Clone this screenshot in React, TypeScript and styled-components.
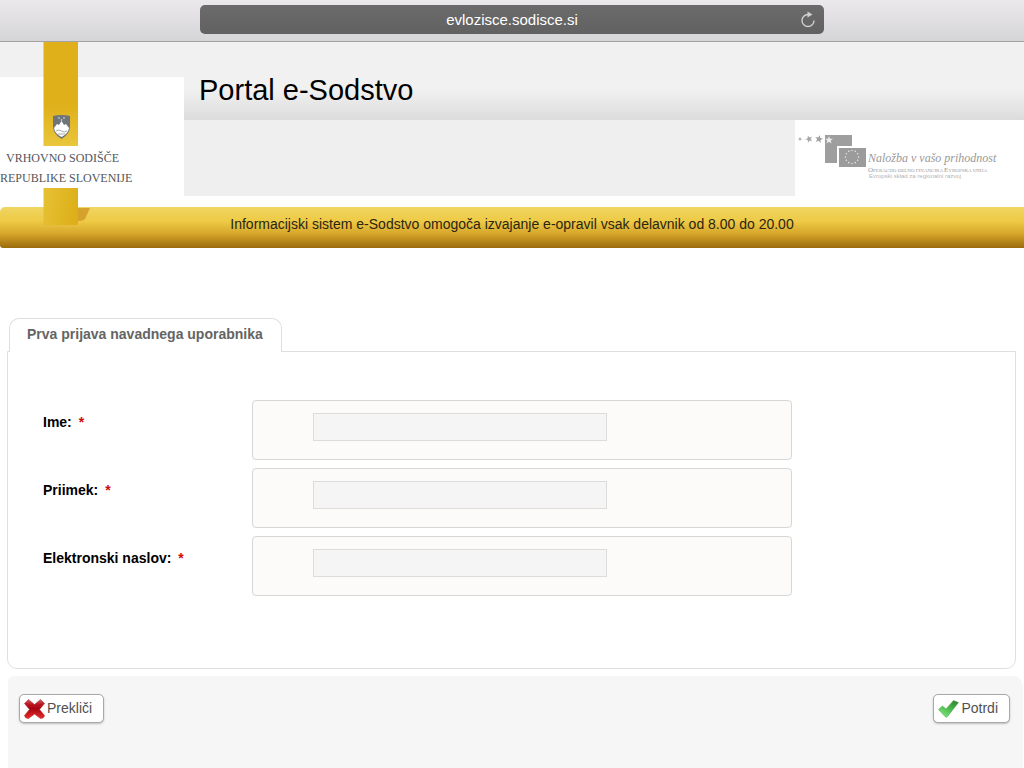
import React from "react";
import styled, { createGlobalStyle } from "styled-components";

const GlobalStyle = createGlobalStyle`
  * { box-sizing: border-box; }
  html, body, #root { min-height: 100%; }
  html { height: 100%; }
  body {
    margin: 0;
    height: 100%;
    background: #fff;
    color: #000;
    font-family: "Liberation Sans", Arial, sans-serif;
  }
  #root { height: 100%; }
`;

const Page = styled.div`
  display: flex;
  flex-direction: column;
  min-height: 100%;
`;

const BrowserBar = styled.div`
  display: flex;
  justify-content: center;
  padding: 5px 0 7px;
  background: linear-gradient(#ebe9ec, #d5d4d6);
  border-bottom: 1px solid #a3a3a6;
`;

const Address = styled.div`
  display: grid;
  grid-template-columns: 32px 1fr 32px;
  align-items: center;
  width: 61%;
  height: 29px;
  border-radius: 5px;
  background: linear-gradient(#6b6b6b, #616161);
  color: #fff;
  font-size: 15px;
  text-align: center;
`;

const Host = styled.span`
  grid-column: 2;
`;

const Reload = styled.button`
  display: grid;
  place-items: center;
  padding: 0;
  border: 0;
  background: none;
  color: #cfcfcf;
`;

const Header = styled.header`
  display: grid;
  grid-template-columns: 184px 1fr;
  padding-bottom: 11px;
`;

const LogoCell = styled.div`
  position: relative;
  padding-top: 35px;
  background: linear-gradient(#f1f1f1 35px, #fff 35px);
`;

const LogoArt = styled.svg`
  position: absolute;
  top: 0;
  left: 0;
  z-index: 1;
`;

const Title = styled.h1`
  margin: 0;
  padding: 30px 15px 0;
  height: 78px;
  background: linear-gradient(#f1f1f1 60%, #dcdcdc);
  font-size: 29px;
  line-height: 36px;
  font-weight: 400;
`;

const SubHeader = styled.div`
  display: flex;
  justify-content: flex-end;
  height: 76px;
  background: #efefef;
`;

const Sponsor = styled.div`
  width: 229px;
  background: #fff;
`;

const Notice = styled.p`
  margin: 0;
  height: 41px;
  padding: 7px 0 0;
  border-radius: 5px 0 0 3px;
  background: linear-gradient(#efd562, #eeca45 35%, #d6a62b 65%, #9b6b0c);
  color: #2b2512;
  font-size: 14px;
  line-height: 20px;
  text-align: center;
`;

const Main = styled.main`
  padding: 70px 8px 0 7px;
`;

const Tab = styled.h2`
  position: relative;
  width: fit-content;
  margin: 0 0 -1px 2px;
  padding: 5px 18px 8px 17px;
  border: 1px solid #dfdfdf;
  border-bottom: 0;
  border-radius: 10px 10px 0 0;
  background: #fff;
  color: #646464;
  font-size: 14px;
  line-height: 20px;
`;

const Panel = styled.div`
  display: flex;
  flex-direction: column;
  gap: 8px;
  padding: 48px 35px 72px;
  border: 1px solid #dfdfdf;
  border-radius: 0 0 10px 10px;
`;

const Row = styled.div`
  display: grid;
  grid-template-columns: 209px minmax(300px, 540px);
`;

const Label = styled.label`
  padding-top: 12px;
  font-size: 14px;
  line-height: 20px;
  font-weight: 700;
`;

const Required = styled.span`
  margin-left: 3px;
  color: #d00a0a;
`;

const FieldBox = styled.div`
  height: 60px;
  padding: 12px 60px;
  border: 1px solid #d6d6d6;
  border-radius: 4px;
  background: #fcfbf9;
`;

const Field = styled.input`
  display: block;
  width: 294px;
  max-width: 100%;
  height: 28px;
  border: 1px solid #dcdcda;
  border-radius: 0;
  padding: 0 6px;
  background: #f5f5f5;
  font: inherit;
`;

const Actions = styled.footer`
  display: flex;
  flex: 1;
  align-items: flex-start;
  justify-content: space-between;
  margin: 7px 1px 0 8px;
  padding: 18px 13px 44px 11px;
  border-radius: 6px 10px 0 0;
  background: #f6f6f6;
`;

const Action = styled.button`
  display: flex;
  align-items: center;
  gap: 2px;
  height: 29px;
  padding: 0 11px 2px 4px;
  border: 1px solid #a9a9a9;
  border-radius: 5px;
  background: #fff;
  box-shadow: 0 1px 2px #bbb;
  color: #505050;
  font-family: inherit;
  font-size: 14px;

  svg {
    margin-top: 2px;
  }
`;

const LogoText = styled.text`
  fill: #55565a;
  font-family: "Liberation Serif", "Times New Roman", serif;
  font-size: 12px;
`;

const Slogan = styled.text`
  fill: #999;
  font-family: "Liberation Serif", "Times New Roman", serif;
  font-size: 12px;
  font-style: italic;
`;

const Programme = styled.text`
  fill: #999;
  font-family: "Liberation Serif", "Times New Roman", serif;
  font-size: 7px;
`;

const Fund = styled.text`
  fill: #b5b5b5;
  font-family: "Liberation Sans", Arial, sans-serif;
  font-size: 6px;
`;

function CourtLogo() {
  return (
    <LogoArt width="184" height="184" role="img" aria-label="Vrhovno sodišče Republike Slovenije">
      <defs>
        <linearGradient id="ribbon" x2="0" y2="1">
          <stop offset="0.6" stopColor="#dfb019" />
          <stop offset="1" stopColor="#e9c63c" />
        </linearGradient>
        <linearGradient id="ribbonEnd" x2="1" y2="0.2">
          <stop stopColor="#e7c135" />
          <stop offset="1" stopColor="#ddb01a" />
        </linearGradient>
      </defs>
      <path d="M78 166H90L85 177Q83 179 78 179Z" fill="#d5a32c" />
      <path d="M43.500 0H78V104H43.500Z" fill="url(#ribbon)" />
      <path d="M43.500 146H78V183H43.500Z" fill="url(#ribbonEnd)" />
      <path d="M53 74Q61 72 70 74V84Q70 92 61.500 97Q53 92 53 84Z" fill="#6f747a" />
      <path d="M54 86L57 82L59 83L61.500 79L64 83L66 82L69 86Q68 92 61.500 95Q55 92 54 86Z" fill="#fff" />
      <path d="M56 89Q59 87 61.500 89T67 89M58 92H65" stroke="#a8acb0" fill="none" />
      <g fill="#e6e6e6">
        <circle cx="59" cy="76" r="0.800" />
        <circle cx="64" cy="76" r="0.800" />
        <circle cx="61.500" cy="78" r="0.800" />
      </g>
      <LogoText x="6" y="120">VRHOVNO SODIŠČE</LogoText>
      <LogoText x="0" y="140">REPUBLIKE SLOVENIJE</LogoText>
    </LogoArt>
  );
}

const STAR = "M0 -4L1 -1.300L4 -1.200L1.700 0.600L2.500 3.500L0 1.800L-2.500 3.500L-1.700 0.600L-4 -1.200L-1 -1.300Z";

function SponsorLogo() {
  const ring = Array.from({ length: 12 }, (_, i) => {
    const a = (i * Math.PI) / 6;
    return <circle key={i} cx={57 + 6.5 * Math.cos(a)} cy={37 + 6.5 * Math.sin(a)} r="0.800" fill="#e2e2e2" />;
  });
  return (
    <svg width="229" height="76" role="img" aria-label="Naložba v vašo prihodnost">
      <circle cx="5" cy="19" r="1.500" fill="#b5b5b5" />
      <path d={STAR} transform="translate(14 19) rotate(-20) scale(0.900)" fill="#a5a5a5" />
      <path d={STAR} transform="translate(24 19) rotate(12)" fill="#a0a0a0" />
      <path d="M30 15H57V43H30Z" fill="#9e9e9e" />
      <path d={STAR} transform="translate(34 20)" fill="#eee" />
      <path d="M43 27H72V48H43Z" fill="#9b9b9b" stroke="#fff" strokeWidth="2" />
      {ring}
      <Slogan x="73" y="42">Naložba v vašo prihodnost</Slogan>
      <Programme x="73" y="52">
        O<tspan fontSize="5">PERACIJO DELNO FINANCIRA </tspan>E<tspan fontSize="5">VROPSKA UNIJA</tspan>
      </Programme>
      <Fund x="74" y="58">Evropski sklad za regionalni razvoj</Fund>
    </svg>
  );
}

function ReloadIcon() {
  return (
    <svg width="16" height="18" viewBox="0 0 16 18" aria-hidden="true">
      <path d="M8 3.500A6 6 0 1 0 14 9.500" fill="none" stroke="currentColor" strokeWidth="1.400" />
      <path d="M7.500 0.500L12.500 3.500L7.500 6.500Z" fill="currentColor" />
    </svg>
  );
}

function CrossIcon() {
  return (
    <svg width="21" height="22" viewBox="0 0 21 22" aria-hidden="true">
      <defs>
        <linearGradient id="cross" x2="0" y2="1">
          <stop stopColor="#c96a6a" />
          <stop offset="0.250" stopColor="#bb1520" />
          <stop offset="0.500" stopColor="#a50510" />
          <stop offset="1" stopColor="#ee2b2b" />
        </linearGradient>
      </defs>
      <path
        d="M0.500 5.500L4.500 1.500L10.500 6.500L16.500 1.500L20.500 5.500L15.500 11.500L20.500 17.500Q20 20.500 16.500 20.500L10.500 16L4.500 20.500Q1 20.500 0.500 17.500L5.500 11.500Z"
        fill="url(#cross)"
        stroke="#b32a30"
        strokeWidth="0.600"
      />
    </svg>
  );
}

function CheckIcon() {
  return (
    <svg width="21" height="20" viewBox="0 0 21 20" aria-hidden="true">
      <defs>
        <linearGradient id="check" x1="1" x2="0.300" y2="1">
          <stop stopColor="#2c7a2c" />
          <stop offset="0.450" stopColor="#43b043" />
          <stop offset="1" stopColor="#7be67b" />
        </linearGradient>
      </defs>
      <path
        d="M0.500 10.500L4.500 7L8 10L15.500 1.500L20.500 3.500L9.500 17.500Q8.500 19 7 17.500Z"
        fill="url(#check)"
        stroke="#4f9f4f"
        strokeWidth="0.500"
      />
    </svg>
  );
}

const FIELDS = [
  { id: "ime", label: "Ime:", type: "text" },
  { id: "priimek", label: "Priimek:", type: "text" },
  { id: "naslov", label: "Elektronski naslov:", type: "email" },
];

export default function App() {
  return (
    <Page>
      <GlobalStyle />
      <BrowserBar>
        <Address>
          <Host>evlozisce.sodisce.si</Host>
          <Reload type="button" aria-label="Osveži">
            <ReloadIcon />
          </Reload>
        </Address>
      </BrowserBar>
      <Header>
        <LogoCell>
          <CourtLogo />
        </LogoCell>
        <div>
          <Title>Portal e-Sodstvo</Title>
          <SubHeader>
            <Sponsor>
              <SponsorLogo />
            </Sponsor>
          </SubHeader>
        </div>
      </Header>
      <Notice>Informacijski sistem e-Sodstvo omogoča izvajanje e-opravil vsak delavnik od 8.00 do 20.00</Notice>
      <Main>
        <Tab>Prva prijava navadnega uporabnika</Tab>
        <Panel>
          {FIELDS.map((field) => (
            <Row key={field.id}>
              <Label htmlFor={field.id}>
                {field.label} <Required>*</Required>
              </Label>
              <FieldBox>
                <Field id={field.id} type={field.type} required />
              </FieldBox>
            </Row>
          ))}
        </Panel>
      </Main>
      <Actions>
        <Action type="button">
          <CrossIcon />
          Prekliči
        </Action>
        <Action type="submit">
          <CheckIcon />
          Potrdi
        </Action>
      </Actions>
    </Page>
  );
}
